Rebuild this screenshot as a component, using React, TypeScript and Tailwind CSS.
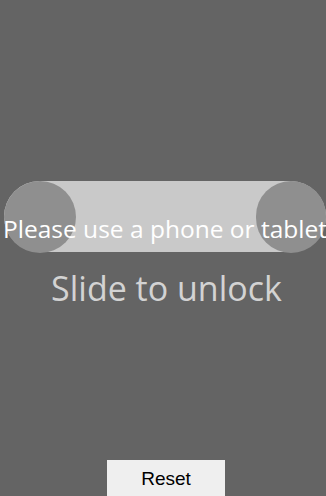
import React from 'react';

export default function App() {
  return (
    <div className="h-[496px] w-full overflow-hidden bg-[#646464] flex flex-col items-center" style={{ fontFamily: '"Open Sans", "Noto Sans", sans-serif' }}>
      <div className="mt-[181px] ml-[4px] self-start relative w-[322px] h-[71px] rounded-full bg-[#c9c9c9] flex items-center justify-between">
        <div className="w-[72px] h-[72px] rounded-full bg-[#8f8f8f]" />
        <div className="w-[70px] h-[72px] rounded-full bg-[#8f8f8f]" />
        <div className="absolute inset-x-[-10px] top-[33px] text-center text-white text-[24.5px] leading-[30px] whitespace-nowrap">
          Please use a phone or tablet
        </div>
      </div>
      <div className="mt-[19px] ml-[7px] text-[34px] leading-[34px] text-[#d3d3d3] whitespace-nowrap">Slide to unlock</div>
      <button
        className="mt-auto ml-[6px] w-[118px] h-[37px] bg-[#efefef] text-black text-[19px] translate-y-[1px] pt-[2px]"
        style={{ fontFamily: '"Liberation Sans", Arial, sans-serif' }}
      >
        Reset
      </button>
    </div>
  );
}
